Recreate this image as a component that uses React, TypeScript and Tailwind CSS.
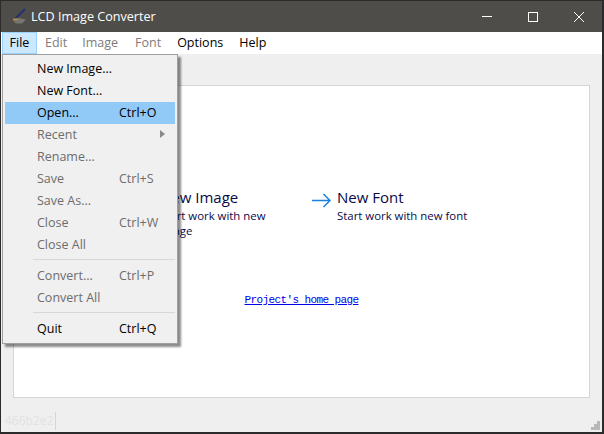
const font = 'font-["Open_Sans","Noto_Sans",sans-serif]';

type Item = { label: string; shortcut?: string; disabled?: boolean; active?: boolean; arrow?: boolean };

const group1: Item[] = [
  { label: 'New Image...' },
  { label: 'New Font...' },
  { label: 'Open...', shortcut: 'Ctrl+O', active: true },
  { label: 'Recent', disabled: true, arrow: true },
  { label: 'Rename...', disabled: true },
  { label: 'Save', shortcut: 'Ctrl+S', disabled: true },
  { label: 'Save As...', disabled: true },
  { label: 'Close', shortcut: 'Ctrl+W', disabled: true },
  { label: 'Close All', disabled: true },
];
const group2: Item[] = [
  { label: 'Convert...', shortcut: 'Ctrl+P', disabled: true },
  { label: 'Convert All', disabled: true },
];
const group3: Item[] = [{ label: 'Quit', shortcut: 'Ctrl+Q' }];

function MenuRow({ item }: { item: Item }) {
  return (
    <div
      className={[
        'relative flex h-[22px] items-center pl-[32px] text-[12.5px]',
        item.active ? 'bg-[#91c9f7]' : '',
        item.disabled ? 'text-[#6d6d6d]' : 'text-black',
      ].join(' ')}
    >
      <span className="w-[82px] shrink-0">{item.label}</span>
      {item.shortcut && <span>{item.shortcut}</span>}
      {item.arrow && (
        <svg className="absolute right-[10px] top-[6px]" width="5" height="8" viewBox="0 0 5 8">
          <path d="M0 0L5 4L0 8Z" fill="#8a8a8a" />
        </svg>
      )}
    </div>
  );
}

function FileMenu() {
  return (
    <div className="absolute left-[2px] top-[54px] w-[176px] border border-[#a0a0a0] bg-[#f0f0f0] px-[2px] py-[3px] shadow-[3px_3px_2px_rgba(0,0,0,0.45)]">
      {group1.map((m) => (
        <MenuRow key={m.label} item={m} />
      ))}
      <div className="mb-[5px] ml-[28px] mt-[3px] h-px bg-[#d7d7d7]" />
      {group2.map((m) => (
        <MenuRow key={m.label} item={m} />
      ))}
      <div className="mb-[5px] ml-[28px] mt-[3px] h-px bg-[#d7d7d7]" />
      {group3.map((m) => (
        <MenuRow key={m.label} item={m} />
      ))}
    </div>
  );
}

function Action({ title, lines, width }: { title: string; lines: string[]; width: string }) {
  return (
    <div className={`flex items-start ${width}`}>
      <svg className="mt-[6px] shrink-0" width="19" height="15" viewBox="0 0 19 15" fill="none" stroke="#1a80e0" strokeWidth="1.5">
        <path d="M0 7.5H18M11.5 1L18 7.5L11.5 14" />
      </svg>
      <div className="ml-[6px] text-[#0a0a4a]">
        <div className="text-[15px] leading-[21px]">{title}</div>
        {lines.map((l) => (
          <div key={l} className="text-[11.4px] leading-[15px]">
            {l}
          </div>
        ))}
      </div>
    </div>
  );
}

export default function App() {
  return (
    <div className={`relative h-[434px] w-[604px] overflow-hidden bg-[#2b2b2b] pb-[2px] pl-px pr-[2px] pt-px ${font}`}>
      <div className="flex h-full flex-col">
        <div className="flex h-[31px] shrink-0 items-center bg-[#4f4d4a]">
          <svg className="ml-[10px]" width="17" height="17" viewBox="0 0 17 17" fill="none">
            <path d="M2 12.5L8 10L15 11.5L11 15.5L5 15.5Z" fill="#77756f" />
            <path d="M4 11L14 1" stroke="#27306e" strokeWidth="2" />
            <path d="M2 11.5L7 11" stroke="#c68a3a" strokeWidth="1.5" />
          </svg>
          <span className="ml-[3px] pt-px text-[12.6px] text-white">LCD Image Converter</span>
          <div className="ml-auto flex items-center">
            <svg width="46" height="31" viewBox="0 0 46 31">
              <path d="M18 15.5H28" stroke="#fff" />
            </svg>
            <svg width="46" height="31" viewBox="0 0 46 31">
              <rect x="18.5" y="11.5" width="9" height="9" fill="none" stroke="#fff" />
            </svg>
            <svg width="46" height="31" viewBox="0 0 46 31">
              <path d="M18 11L28 21M28 11L18 21" stroke="#fff" />
            </svg>
          </div>
        </div>

        <div className="flex h-[22px] shrink-0 items-stretch bg-white text-[12.5px] text-black">
          <div className="ml-px flex w-[35px] items-center justify-center border border-[#99d1ff] bg-[#cce8ff]">File</div>
          <div className="ml-[8px] flex items-center text-[#7d7d7d]">Edit</div>
          <div className="ml-[15px] flex items-center text-[#7d7d7d]">Image</div>
          <div className="ml-[17px] flex items-center text-[#7d7d7d]">Font</div>
          <div className="ml-[16px] flex items-center">Options</div>
          <div className="ml-[16px] flex items-center">Help</div>
        </div>

        <div className="flex min-h-0 flex-1 flex-col bg-[#efefef] px-[12px] pt-[31px]">
          <div className="flex h-[313px] shrink-0 flex-col border border-[#d5d5d5] bg-white">
            <div className="ml-[121px] mt-[101px] flex">
              <Action title="New Image" lines={['Start work with new', 'image']} width="w-[177px]" />
              <Action title="New Font" lines={['Start work with new font']} width="w-[175px]" />
            </div>
            <div className="mt-[56px] text-center font-['Liberation_Mono',monospace] text-[11px] leading-[13px] tracking-[-0.6px] text-[#0000ee] underline">
              Project's home page
            </div>
          </div>
          <div className="relative -mx-[12px] flex flex-1 items-end pb-[2px] pl-[4px] text-[12px] text-[#e2e2e2]">
            <span className="border-r border-[#d5d5d5] pr-[2px] leading-[18px]">466b2e2</span>
            <svg className="absolute bottom-[2px] right-[2px]" width="9" height="9" viewBox="0 0 9 9" fill="#b8b8b8">
              <rect x="6" y="0" width="3" height="3" />
              <rect x="3" y="3" width="3" height="3" />
              <rect x="6" y="3" width="3" height="3" />
              <rect x="0" y="6" width="3" height="3" />
              <rect x="3" y="6" width="3" height="3" />
              <rect x="6" y="6" width="3" height="3" />
            </svg>
          </div>
        </div>
      </div>
      <FileMenu />
    </div>
  );
}
